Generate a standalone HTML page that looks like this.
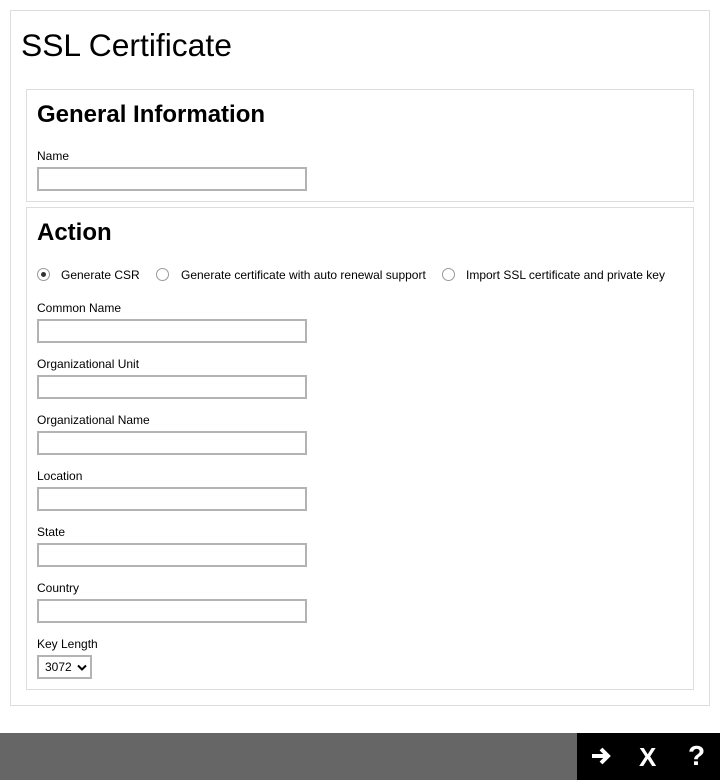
<!DOCTYPE html>
<html><head><style>
*{margin:0;padding:0;box-sizing:border-box}
body{width:720px;height:780px;background:#fff;font-family:"Liberation Sans",Arial,sans-serif;color:#000;position:relative;overflow:hidden}
.a{position:absolute}
.box{position:absolute;border:1px solid #ddd}
.lbl{position:absolute;left:37px;font-size:12px;line-height:14px}
.inp{position:absolute;left:37px;width:270px;height:24px;border:2px solid #b3b3b3;background:#fff}
h2{position:absolute;left:37px;font-size:24px;font-weight:bold;line-height:28px}
.r{position:absolute;width:13px;height:13px;border:1.5px solid #999;border-radius:50%;background:#fff}
.rt{position:absolute;font-size:12px;line-height:14px}
</style></head><body>
<div class="box" style="left:10px;top:10px;width:700px;height:696px"></div>
<div class="a" style="left:21px;top:27px;font-size:31.8px;line-height:36px">SSL Certificate</div>
<div class="box" style="left:26px;top:89px;width:668px;height:113px"></div>
<h2 style="top:101px">General Information</h2>
<div class="lbl" style="top:149px">Name</div>
<div class="inp" style="top:167px"></div>
<div class="box" style="left:26px;top:207px;width:668px;height:483px"></div>
<h2 style="top:219px">Action</h2>
<div class="r" style="left:37px;top:268px"><div style="position:absolute;left:2.5px;top:2.5px;width:5px;height:5px;border-radius:50%;background:#333"></div></div>
<div class="rt" style="left:61px;top:268px">Generate CSR</div>
<div class="r" style="left:156px;top:268px"></div>
<div class="rt" style="left:181px;top:268px">Generate certificate with auto renewal support</div>
<div class="r" style="left:442px;top:268px"></div>
<div class="rt" style="left:466px;top:268px">Import SSL certificate and private key</div>
<div class="lbl" style="top:301px">Common Name</div><div class="inp" style="top:319px"></div>
<div class="lbl" style="top:357px">Organizational Unit</div><div class="inp" style="top:375px"></div>
<div class="lbl" style="top:413px">Organizational Name</div><div class="inp" style="top:431px"></div>
<div class="lbl" style="top:469px">Location</div><div class="inp" style="top:487px"></div>
<div class="lbl" style="top:525px">State</div><div class="inp" style="top:543px"></div>
<div class="lbl" style="top:581px">Country</div><div class="inp" style="top:599px"></div>
<div class="lbl" style="top:637px">Key Length</div>
<div class="a" style="left:37px;top:655px;width:55px;height:24px;border:2px solid #b3b3b3;font-size:12px;line-height:20px;padding-left:6px">3072
<svg class="a" style="left:38px;top:7px" width="10" height="7" viewBox="0 0 10 7"><path d="M1 1.5L5 5.5L9 1.5" stroke="#000" stroke-width="2" fill="none"/></svg></div>
<div class="a" style="left:0;top:733px;width:720px;height:47px;background:#666"></div>
<div class="a" style="left:577px;top:733px;width:143px;height:47px;background:#000"></div>
<svg class="a" style="left:590px;top:745px" width="22" height="22" viewBox="0 0 22 22"><path d="M2 11H18M11 4L18 11L11 18" stroke="#fff" stroke-width="4" fill="none"/></svg>
<div class="a" style="left:639px;top:742px;color:#fff;font-size:26px;font-weight:bold;line-height:30px">X</div>
<div class="a" style="left:688px;top:740px;color:#fff;font-size:28px;font-weight:bold;line-height:32px">?</div>
</body></html>
